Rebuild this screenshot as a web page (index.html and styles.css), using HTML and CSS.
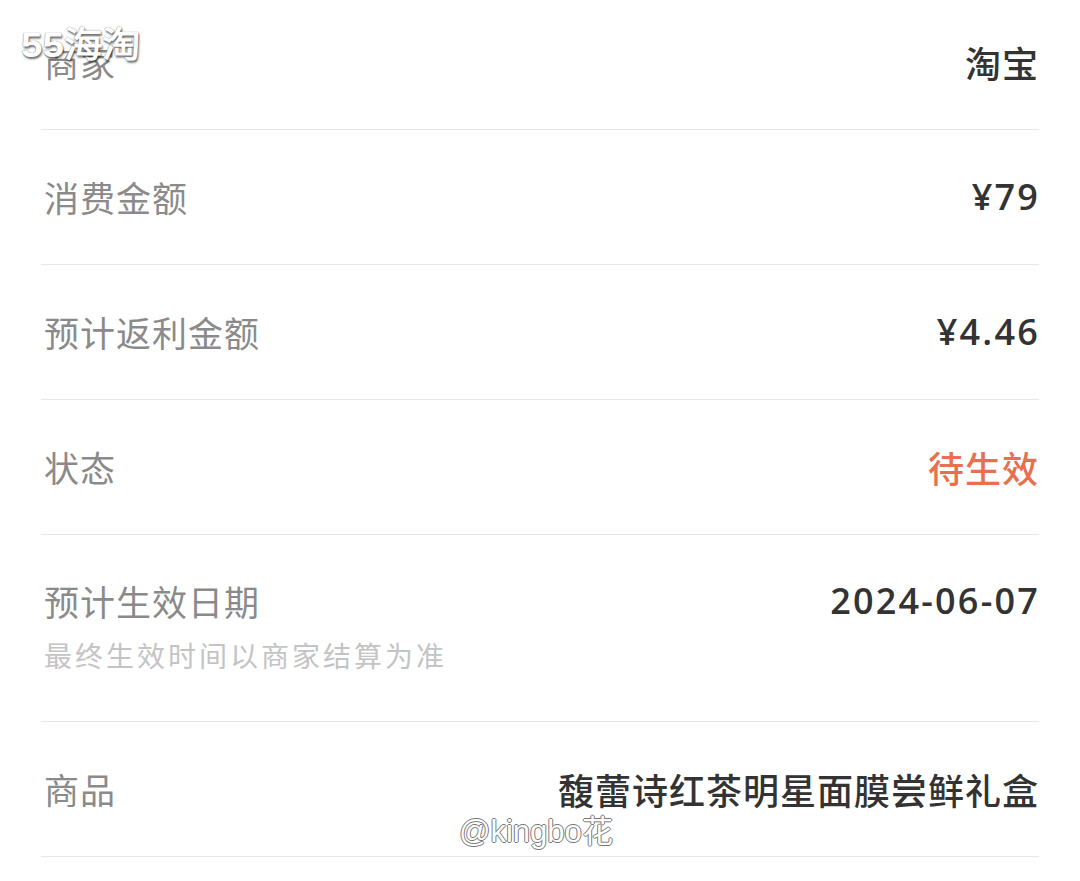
FILE: index.html
```html
<!DOCTYPE html>
<html lang="zh-CN">
<head>
    <meta charset="UTF-8">
    <meta name="viewport" content="width=device-width, initial-scale=1.0">
    <title>订单详情</title>
    <link rel="stylesheet" href="styles.css">
</head>
<body>
    <div class="detail">
        <div class="row">
            <span class="label">商家</span>
            <span class="value">淘宝</span>
        </div>
        <div class="row">
            <span class="label">消费金额</span>
            <span class="value num">¥79</span>
        </div>
        <div class="row">
            <span class="label">预计返利金额</span>
            <span class="value num">¥4.46</span>
        </div>
        <div class="row">
            <span class="label">状态</span>
            <span class="value pending">待生效</span>
        </div>
        <div class="row tall">
            <div>
                <div class="label">预计生效日期</div>
                <div class="sub">最终生效时间以商家结算为准</div>
            </div>
            <span class="value num">2024-06-07</span>
        </div>
        <div class="row">
            <span class="label">商品</span>
            <span class="value">馥蕾诗红茶明星面膜尝鲜礼盒</span>
        </div>
    </div>

    <!-- 水印 -->
    <div class="mark-site">55海淘</div>
    <div class="mark-user">@kingbo花</div>
</body>
</html>
```

FILE: styles.css
```css
body {
    margin: 0;
    padding: 0;
    background-color: #fff;
    font-family: "Noto Sans CJK SC", "Noto Sans", sans-serif;
    overflow: hidden;
}

.detail {
    margin: -5px 41px 0 41px;
}

.row {
    display: flex;
    justify-content: space-between;
    align-items: center;
    height: 134px;
    border-bottom: 1px solid #e6e6e6;
    padding: 0 1px 0 3px;
}

.row.tall {
    height: 186px;
    align-items: flex-start;
}

.row.tall > div,
.row.tall .value {
    padding-top: 43px;
}

.label {
    font-size: 35px;
    line-height: 46px;
    color: #8a8a8a;
    letter-spacing: 1px;
}

.sub {
    font-size: 28px;
    line-height: 40px;
    margin-top: 11px;
    color: #c4c4c4;
    letter-spacing: 3px;
}

.value {
    font-size: 36px;
    line-height: 46px;
    font-weight: 500;
    color: #333;
    letter-spacing: 1px;
    margin-right: -1px;
}

.value.num {
    font-family: "Open Sans", "Noto Sans", sans-serif;
    font-weight: 600;
    font-size: 36px;
    letter-spacing: 2.2px;
    margin-right: -2px;
}

.value.pending {
    color: #e8704e;
}

.mark-site {
    position: absolute;
    left: 21px;
    top: 16px;
    font-family: "Liberation Sans", sans-serif;
    font-weight: bold;
    font-size: 35px;
    letter-spacing: 0;
    transform: scaleX(1.1);
    transform-origin: left center;
    color: #fff;
    text-shadow: 1px 2px 2px rgba(0,0,0,0.55), 0 0 1px #666;
}

.mark-user {
    position: absolute;
    left: 459px;
    top: 806px;
    font-family: "Liberation Sans", sans-serif;
    font-size: 31px;
    color: #fff;
    text-shadow: -1px 0 #777, 1px 0 #777, 0 -1px #777, 0 1px #777;
}
```
